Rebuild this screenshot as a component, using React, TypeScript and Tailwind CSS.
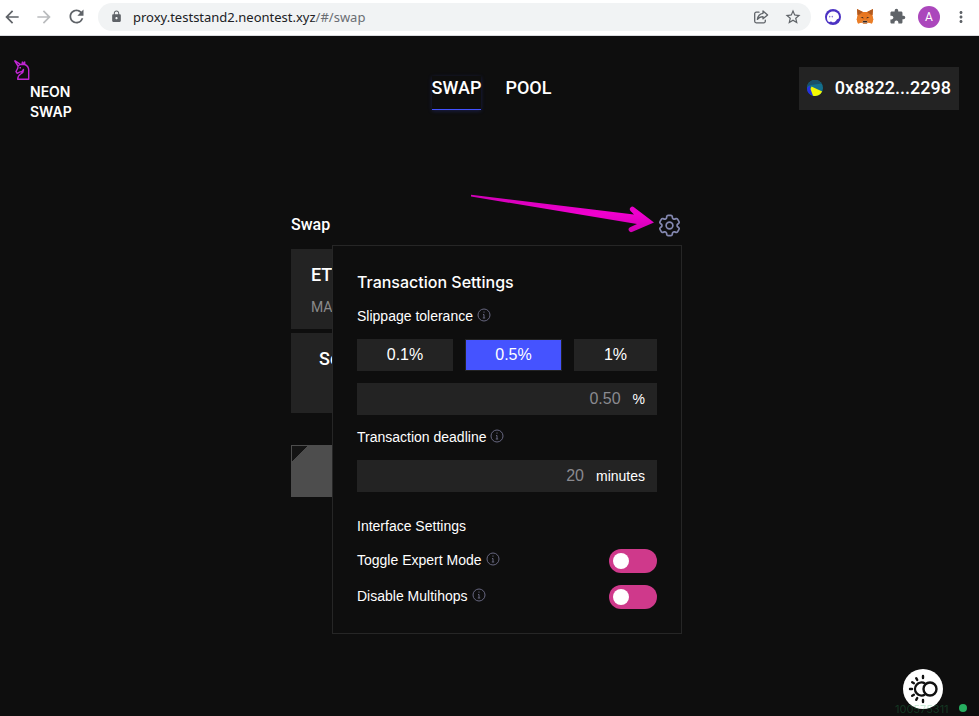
import type { ReactNode } from "react";
import { HiOutlineCog6Tooth } from "react-icons/hi2";
import { MdArrowBack, MdArrowForward, MdRefresh, MdLock, MdStarBorder, MdExtension, MdMoreVert } from "react-icons/md";

const display = "font-['Roboto','Liberation_Sans',sans-serif] font-medium";

function ToolButton({ label, children }: { label: string; children: ReactNode }) {
  return (
    <button type="button" aria-label={label} className="flex size-6 shrink-0 items-center justify-center text-[#5f6368]">
      {children}
    </button>
  );
}

function ShareIcon() {
  return (
    <svg width="16" height="16" viewBox="0 0 16 16" fill="none" stroke="currentColor" strokeWidth="1.3" strokeLinejoin="round" strokeLinecap="round">
      <path d="M6 3.2H3.2a1.5 1.5 0 0 0-1.5 1.5v7.6a1.5 1.5 0 0 0 1.5 1.5h7.6a1.5 1.5 0 0 0 1.5-1.5v-1.1" />
      <path d="M10 2l4.6 3.9L10 9.8V7.6C7.400 7.600 5.700 8.500 4.400 10.400 4.800 7.200 6.700 4.700 10 4.300z" />
    </svg>
  );
}

function PhantomIcon() {
  return (
    <svg width="16" height="16" viewBox="0 0 16 16">
      <circle cx="8" cy="8" r="8" fill="#4b32c3" />
      <path d="M2 9.500C1.800 5.200 4.500 2.500 8.200 2.500c3.400 0 5.800 2.400 5.800 5.200 0 1.800-.8 2.500-2 2.500-.9 2-2.300 3.100-3.900 3.100-1.300 0-1.500-.8-2.200-.8-.6 0-1 .5-1.800.4C2.700 12.600 2.100 11 2 9.500z" fill="#fff" />
      <ellipse cx="4.800" cy="7.600" rx=".5" ry=".9" fill="#4b32c3" />
      <ellipse cx="7.200" cy="7.600" rx=".5" ry=".9" fill="#4b32c3" />
    </svg>
  );
}

function FoxIcon() {
  return (
    <svg width="18" height="17" viewBox="0 0 18 17">
      <path d="M1 1l6 3h4l6-3-.5 6.500.8 4L16 15.500l-4-1L10.500 16h-3L6 14.500l-4 1L.700 11.500l.8-4z" fill="#e8761f" />
      <path d="M1 1l6 3-3.500 2.500-2 .5zM17 1l-6 3 3.500 2.500 2 .5z" fill="#b05a20" />
      <path d="M1.500 8.500l4-1.500L7 10l-1 4.500-4 1L.700 11.500zM16.500 8.500l-4-1.500L11 10l1 4.500 4 1 1.300-4z" fill="#ea7e28" />
      <path d="M4.500 9.500l2.500-.5.500 1.500zM13.500 9.500L11 9l-.5 1.500z" fill="#3a2a22" />
      <path d="M6 14l1.500-1.500h3L12 14l-1.500 1.500h-3z" fill="#b99a86" />
      <path d="M7.200 13h3.600l.3 1.300H6.900z" fill="#2b2320" />
    </svg>
  );
}

function BrowserBar() {
  return (
    <div className="flex h-9 items-center border-b border-[#dadce0] bg-white pr-1.5 pb-0.5">
      <div className="flex gap-2">
        <ToolButton label="Back"><MdArrowBack size={20} /></ToolButton>
        <button type="button" disabled aria-label="Forward" className="flex size-6 items-center justify-center text-[#babcbe]">
          <MdArrowForward size={20} />
        </button>
        <ToolButton label="Reload"><MdRefresh size={21} /></ToolButton>
      </div>
      <div className="mx-2.5 flex h-7 min-w-0 flex-1 items-center rounded-full bg-[#f1f3f4] pr-1.5 pl-3">
        <MdLock size={13} className="shrink-0 text-[#5f6368]" />
        <p className="ml-2.5 min-w-0 flex-1 truncate font-['Noto_Sans','Open_Sans',sans-serif] text-[13px] leading-5 text-[#202124]">
          proxy.teststand2.neontest.xyz<span className="text-[#6a6e73]">/#/swap</span>
        </p>
        <div className="flex gap-2">
          <ToolButton label="Share this page"><ShareIcon /></ToolButton>
          <ToolButton label="Bookmark this page"><MdStarBorder size={18} /></ToolButton>
        </div>
      </div>
      <div className="flex gap-2">
        <ToolButton label="Phantom"><PhantomIcon /></ToolButton>
        <ToolButton label="MetaMask"><FoxIcon /></ToolButton>
        <ToolButton label="Extensions"><MdExtension size={17} /></ToolButton>
        <button type="button" aria-label="Profile" className="flex size-6 items-center justify-center">
          <span className="flex size-[22px] items-center justify-center rounded-full bg-[#ab47bc] font-['Roboto',sans-serif] text-xs text-white">A</span>
        </button>
        <ToolButton label="Menu"><MdMoreVert size={18} /></ToolButton>
      </div>
    </div>
  );
}

function UnicornIcon() {
  return (
    <svg width="16" height="20" viewBox="0 0 16 20" fill="none" stroke="#c026d3" strokeWidth="1.400" strokeLinejoin="round">
      <path d="M.500.500l5.500 3.700M.500.500l3.500 5.500M8.500 1.500L8 4.500M6 4.200L4 6.200 3.800 8.200 2 11.500l1.200 1.800L5.500 12.200 8 11.500 9.500 9.500c.2 2.200-1 3.500-2.800 4.500C4.500 15.200 3.700 17 3.700 19.300h11V10c0-2.800-1.500-4.500-4-5.500H6z" />
      <path d="M5.500 7.800h1.500M10.700 4.500V2L8.500 4" />
    </svg>
  );
}

function Header() {
  return (
    <header className="grid grid-cols-[1fr_auto_1fr] items-start pt-6 pr-5 pl-3.5 text-white">
      <a href="#/swap" className="justify-self-start">
        <UnicornIcon />
        <span className="mt-0.5 ml-4 block w-12 font-['Inter','Roboto',sans-serif] text-sm leading-5 font-semibold">NEON SWAP</span>
      </a>
      <nav className={`mt-4 flex gap-6 pl-2.5 text-lg leading-6 ${display}`}>
        <a href="#/swap" className="border-b border-[#4252ff] pb-[9px] shadow-[0_1px_4px_0_#4252ff40]">SWAP</a>
        <a href="#/pool">POOL</a>
      </nav>
      <button type="button" className={`mt-[7px] flex h-[43px] items-center gap-3 justify-self-end bg-[#232323] px-2 pb-0.5 text-lg ${display}`}>
        <svg width="16" height="16" viewBox="0 0 16 16">
          <circle cx="8" cy="8" r="8" fill="#136f8c" />
          <path d="M0 6.500A8 8 0 0 1 14.500 3.500L4 5z" fill="#17506a" />
          <path d="M2.500 5.500L0 8a8 8 0 0 0 6 7.800z" fill="#2530e0" />
          <path d="M4.500 6.500L15.200 11.500A8 8 0 0 1 6 15.700L3.500 9z" fill="#f3f803" />
        </svg>
        0x8822...2298
      </button>
    </header>
  );
}

function InfoButton({ about }: { about: string }) {
  return (
    <button type="button" aria-label={`About ${about}`} className="mb-0.5 text-[#66667f]">
      <svg width="14" height="14" viewBox="0 0 14 14" fill="none" stroke="currentColor">
        <circle cx="7" cy="7" r="6" />
        <path d="M7 3.500v1.200M6 6.500h1v3.500M5.800 10h2.400" />
      </svg>
    </button>
  );
}

function FieldLabel({ id, children }: { id: string; children: string }) {
  return (
    <div className="flex h-[21px] items-center gap-1 pb-0.5">
      <label htmlFor={id}>{children}</label>
      <InfoButton about={children} />
    </div>
  );
}

function AmountField({ id, value, unit }: { id: string; value: string; unit: string }) {
  return (
    <div className="mt-3 flex h-8 items-center gap-3 bg-[#232323] px-3">
      <input id={id} placeholder={value} className="min-w-0 flex-1 bg-transparent text-right text-base text-white outline-none placeholder:text-[#8a8a8f]" />
      <span>{unit}</span>
    </div>
  );
}

function ToggleRow({ id, children }: { id: string; children: string }) {
  return (
    <div className="mt-3 flex items-center justify-between">
      <FieldLabel id={id}>{children}</FieldLabel>
      <input
        id={id}
        type="checkbox"
        role="switch"
        className="flex h-6 w-12 appearance-none items-center rounded-full bg-[#cf398b] px-1 before:size-4 before:rounded-full before:bg-white checked:justify-end"
      />
    </div>
  );
}

function SettingsPanel() {
  return (
    <section className="absolute top-8 right-0 z-10 w-[350px] border border-[#262626] bg-[#0e0e0e] p-6 font-['Liberation_Sans',Arial,sans-serif] text-sm text-white">
      <h2 className="font-['Inter','Roboto',sans-serif] text-base leading-6 font-medium">Transaction Settings</h2>
      <div className="mt-3">
        <FieldLabel id="slippage">Slippage tolerance</FieldLabel>
      </div>
      <div className="mt-3 flex gap-3 text-base">
        <button type="button" className="h-8 w-24 bg-[#232323]">0.1%</button>
        <button type="button" className="h-8 w-[97px] border border-[#232323] bg-[#4553ff]">0.5%</button>
        <button type="button" className="h-8 flex-1 bg-[#232323]">1%</button>
      </div>
      <AmountField id="slippage" value="0.50" unit="%" />
      <div className="mt-3">
        <FieldLabel id="deadline">Transaction deadline</FieldLabel>
      </div>
      <AmountField id="deadline" value="20" unit="minutes" />
      <h3 className="mt-6 leading-[21px]">Interface Settings</h3>
      <ToggleRow id="expert">Toggle Expert Mode</ToggleRow>
      <ToggleRow id="multihops">Disable Multihops</ToggleRow>
    </section>
  );
}

function PointerArrow() {
  return (
    <svg className="pointer-events-none absolute -top-5 right-7 z-20" width="184" height="40" viewBox="0 0 184 40">
      <defs>
        <linearGradient id="arrow" x1="0" y1="0" x2="0" y2="1">
          <stop offset="0" stopColor="#d000b6" />
          <stop offset=".5" stopColor="#f000cf" />
          <stop offset="1" stopColor="#cf00b4" />
        </linearGradient>
      </defs>
      <path d="M1 1.800L164 21.500l-3.500-3.500a2.600 2.600 0 0 1 3.500-3.800L184 29.500l-21.500 9.300a2.600 2.600 0 0 1-2.500-4.600l7-3.200L1 3.400z" fill="url(#arrow)" />
    </svg>
  );
}

function SwapCard() {
  return (
    <main className="mt-[91px] pr-1.5">
      <div className={`relative mx-auto w-full max-w-[391px] text-white ${display}`}>
        <div className="relative">
          <div className="flex h-6 items-center justify-between text-base">
            <h1>Swap</h1>
            <button type="button" aria-label="Settings" className="text-[#8488b0]">
              <HiOutlineCog6Tooth size={27} className="-mr-px" />
            </button>
          </div>
          <PointerArrow />
          <SettingsPanel />
        </div>
        <div className="mt-3 h-20 bg-[#232323] px-5 pt-3.5">
          <p className="text-lg leading-6">ETH</p>
          <p className="mt-2.5 text-sm leading-5 font-normal text-[#8a8a8a]">MAX</p>
        </div>
        <div className="mt-1 h-20 bg-[#232323] px-7 pt-3.5">
          <p className="text-lg leading-6">Select</p>
        </div>
        <div className="mt-8 h-[52px] border border-[#4d4d4d] bg-[linear-gradient(135deg,#141414_11px,#4d4d4d_11px)]" />
      </div>
    </main>
  );
}

function StatusCorner() {
  return (
    <footer className="fixed right-3 bottom-0 flex items-end gap-2">
      <div className="relative flex w-14 flex-col items-center">
        <button type="button" aria-label="Toggle theme" className="mb-[7px] size-10 rounded-full bg-white">
          <svg width="40" height="40" viewBox="0 0 40 40" fill="none" stroke="#111" strokeWidth="2.400">
            <path d="M22 14.500A6.500 6.500 0 1 0 22 25.500" />
            <circle cx="27" cy="20" r="6.500" />
            <path d="M20 7v2M20 31v2M7 20h2M13.200 9.200l1 1.700M13.200 30.800l1-1.700M9.200 13.200l1.700 1M9.200 26.800l1.700-1" strokeLinecap="round" />
          </svg>
        </button>
        <a href="#/block" className="absolute bottom-0 left-0 font-['Inter',sans-serif] text-[11px] leading-[14px] text-[#27ae60]/25">100575311</a>
      </div>
      <span className="mb-1 size-2 rounded-full bg-[#27ae60]" />
    </footer>
  );
}

export default function App() {
  return (
    <div className="min-h-screen bg-[#0e0e0e]">
      <BrowserBar />
      <Header />
      <SwapCard />
      <StatusCorner />
    </div>
  );
}
